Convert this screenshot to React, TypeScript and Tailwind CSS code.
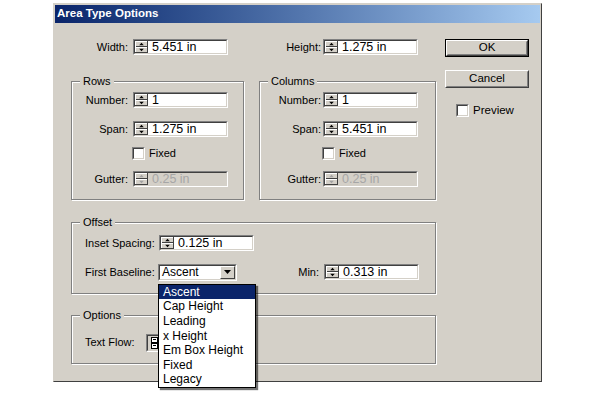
import React from "react";

function Spinner({ disabled }: { disabled?: boolean }) {
  const c = disabled ? "#a0a0a0" : "#000";
  return (
    <svg width="13" height="12" viewBox="0 0 13 12" className="block shrink-0">
      <rect x="0" y="0" width="13" height="12" fill="#d4d0c8" />
      <rect x="0" y="0" width="12" height="1" fill="#fff" />
      <rect x="0" y="0" width="1" height="11" fill="#fff" />
      <rect x="12" y="0" width="1" height="12" fill="#404040" />
      <rect x="0" y="11" width="13" height="1" fill="#404040" />
      <rect x="1" y="5" width="11" height="1" fill="#404040" />
      <rect x="1" y="6" width="11" height="1" fill="#fff" />
      <path d="M6.5 1.8 L4.2 4.2 L8.8 4.2 Z" fill={c} />
      <path d="M4.2 7.8 L8.8 7.8 L6.5 10.2 Z" fill={c} />
    </svg>
  );
}

function Sunken({
  className,
  inner,
  children,
}: {
  className: string;
  inner: string;
  children?: React.ReactNode;
}) {
  return (
    <div className={"border border-t-[#808080] border-l-[#808080] border-b-white border-r-white " + className}>
      <div className={"flex h-full w-full border border-t-[#404040] border-l-[#404040] border-b-[#d4d0c8] border-r-[#d4d0c8] " + inner}>
        {children}
      </div>
    </div>
  );
}

function SpinInput({ value, disabled }: { value: string; disabled?: boolean }) {
  return (
    <Sunken className="h-[16px] w-[95px] shrink-0" inner={disabled ? "bg-[#d4d0c8]" : "bg-white"}>
      <Spinner disabled={disabled} />
      <span
        className={
          "flex items-center pl-[4px] text-[12.5px] leading-none " +
          (disabled ? "text-[#a6a6a6]" : "text-black")
        }
      >
        {value}
      </span>
    </Sunken>
  );
}

function Checkbox() {
  return <Sunken className="h-[13px] w-[13px] shrink-0" inner="bg-white" />;
}

function Group({
  title,
  className,
  children,
}: {
  title: string;
  className: string;
  children?: React.ReactNode;
}) {
  return (
    <div
      className={
        "relative border border-[#808080] shadow-[inset_1px_1px_0_#fff,1px_1px_0_#fff] " + className
      }
    >
      <span className="absolute -top-[8px] left-[8px] bg-[#d4d0c8] px-[3px] leading-[14px]">{title}</span>
      {children}
    </div>
  );
}

function Raised({
  label,
  isDefault,
}: {
  label: string;
  isDefault?: boolean;
}) {
  const inner = (
    <div className="h-full w-full border border-t-white border-l-white border-b-[#404040] border-r-[#404040]">
      <div className="flex h-full w-full items-center justify-center border border-transparent border-b-[#808080] border-r-[#808080] text-[11.5px] leading-none">
        {label}
      </div>
    </div>
  );
  return isDefault ? (
    <div className="h-[18px] w-[84px] border border-black">{inner}</div>
  ) : (
    <div className="h-[18px] w-[84px]">{inner}</div>
  );
}

export default function App() {
  const items = ["Ascent", "Cap Height", "Leading", "x Height", "Em Box Height", "Fixed", "Legacy"];
  return (
    <div className="min-h-[404px] bg-white pl-[53px] pt-[3px] font-['Liberation_Sans',Arial,sans-serif] text-[11px] text-black">
      <div className="h-[379px] w-[489px] border border-t-[#d4d0c8] border-l-[#d4d0c8] border-b-[#404040] border-r-[#404040] bg-[#d4d0c8] p-[1px]">
        <div className="flex h-[18px] items-center bg-linear-to-r from-[#0a246a] to-[#a6caf0] pl-[2px] text-[11.5px] font-bold text-white">
          Area Type Options
        </div>
        <div className="flex pl-[16px] pt-[16px]">
          {/* left column */}
          <div className="flex w-[365px] flex-col">
            {/* top row */}
            <div className="flex h-[16px]">
              <div className="flex w-[173px] items-center">
                <span className="w-[57px] text-right">Width:</span>
                <span className="ml-[5px]">
                  <SpinInput value="5.451 in" />
                </span>
              </div>
              <div className="ml-[15px] flex items-center">
                <span className="w-[62px] text-right">Height:</span>
                <span className="ml-[2px]">
                  <SpinInput value="1.275 in" />
                </span>
              </div>
            </div>

            {/* rows / columns */}
            <div className="mt-[26px] flex">
              <Group title="Rows" className="h-[119px] w-[173px]">
                <div className="flex flex-col pt-[10px]">
                  <div className="flex h-[16px] items-center">
                    <span className="w-[56px] text-right">Number:</span>
                    <span className="ml-[5px]"><SpinInput value="1" /></span>
                  </div>
                  <div className="mt-[13px] flex h-[16px] items-center">
                    <span className="w-[56px] text-right">Span:</span>
                    <span className="ml-[5px]"><SpinInput value="1.275 in" /></span>
                  </div>
                  <div className="mt-[10px] flex h-[13px] items-center pl-[60px]">
                    <Checkbox />
                    <span className="ml-[4px]">Fixed</span>
                  </div>
                  <div className="mt-[11px] flex h-[16px] items-center">
                    <span className="w-[56px] text-right">Gutter:</span>
                    <span className="ml-[5px]"><SpinInput value="0.25 in" disabled /></span>
                  </div>
                </div>
              </Group>
              <Group title="Columns" className="ml-[15px] h-[119px] w-[177px]">
                <div className="flex flex-col pt-[10px]">
                  <div className="flex h-[16px] items-center">
                    <span className="w-[61px] text-right">Number:</span>
                    <span className="ml-[2px]"><SpinInput value="1" /></span>
                  </div>
                  <div className="mt-[13px] flex h-[16px] items-center">
                    <span className="w-[61px] text-right">Span:</span>
                    <span className="ml-[2px]"><SpinInput value="5.451 in" /></span>
                  </div>
                  <div className="mt-[10px] flex h-[13px] items-center pl-[62px]">
                    <Checkbox />
                    <span className="ml-[4px]">Fixed</span>
                  </div>
                  <div className="mt-[11px] flex h-[16px] items-center">
                    <span className="w-[61px] text-right">Gutter:</span>
                    <span className="ml-[2px]"><SpinInput value="0.25 in" disabled /></span>
                  </div>
                </div>
              </Group>
            </div>

            {/* offset */}
            <Group title="Offset" className="mt-[22px] h-[72px] w-[365px]">
              <div className="flex flex-col pl-[13px] pt-[12px]">
                <div className="flex h-[16px] items-center">
                  <span className="w-[74px]">Inset Spacing:</span>
                  <SpinInput value="0.125 in" />
                </div>
                <div className="mt-[12px] flex h-[18px] items-center">
                  <span className="w-[73px]">First Baseline:</span>
                  <div className="relative">
                    <Sunken className="h-[17px] w-[79px]" inner="bg-white items-center justify-between">
                      <span className="pl-[2px] text-[12px] leading-none">Ascent</span>
                      <div className="flex h-[13px] w-[15px] items-center justify-center border border-t-white border-l-white border-b-[#404040] border-r-[#404040] bg-[#d4d0c8]">
                        <svg width="7" height="4" viewBox="0 0 7 4" className="block">
                          <path d="M0 0 H7 L3.5 4 Z" fill="#000" />
                        </svg>
                      </div>
                    </Sunken>
                    <div className="absolute left-0 top-[20px] z-10 w-[98px] border border-black bg-white shadow-[2px_2px_1px_rgba(0,0,0,0.55)]">
                      {items.map((it, i) => (
                        <div
                          key={it}
                          className={
                            "flex h-[14.6px] items-center pl-[4px] text-[12px] leading-none " +
                            (i === 0 ? "bg-[#0a246a] text-white" : "text-black")
                          }
                        >
                          {it}
                        </div>
                      ))}
                    </div>
                  </div>
                  <span className="ml-auto">Min:</span>
                  <span className="ml-[5px] mr-[16px]"><SpinInput value="0.313 in" /></span>
                </div>
              </div>
            </Group>

            {/* options */}
            <Group title="Options" className="mt-[21px] h-[49px] w-[365px]">
              <div className="flex h-full items-center pl-[13px] pt-[6px]">
                <span className="w-[61px]">Text Flow:</span>
                <Sunken className="h-[18px] w-[24px]" inner="bg-[#d4d0c8] items-center justify-center">
                  <svg width="14" height="12" viewBox="0 0 14 12" className="block">
                    <rect x="0.5" y="0.5" width="6" height="5" fill="#fff" stroke="#000" />
                    <rect x="0.5" y="6.5" width="6" height="5" fill="#fff" stroke="#000" />
                    <path d="M2 2.5 H5 M2 8.5 H5" stroke="#000" />
                    <path d="M8 3 H12 M8 9 H12" stroke="#000" />
                  </svg>
                </Sunken>
              </div>
            </Group>
          </div>

          {/* right column */}
          <div className="ml-[9px] flex w-[84px] flex-col">
            <Raised label="OK" isDefault />
            <div className="mt-[13px]">
              <Raised label="Cancel" />
            </div>
            <div className="mt-[14px] flex items-center pl-[11px]">
              <Checkbox />
              <span className="ml-[4px] text-[11.5px]">Preview</span>
            </div>
          </div>
        </div>
      </div>
    </div>
  );
}
